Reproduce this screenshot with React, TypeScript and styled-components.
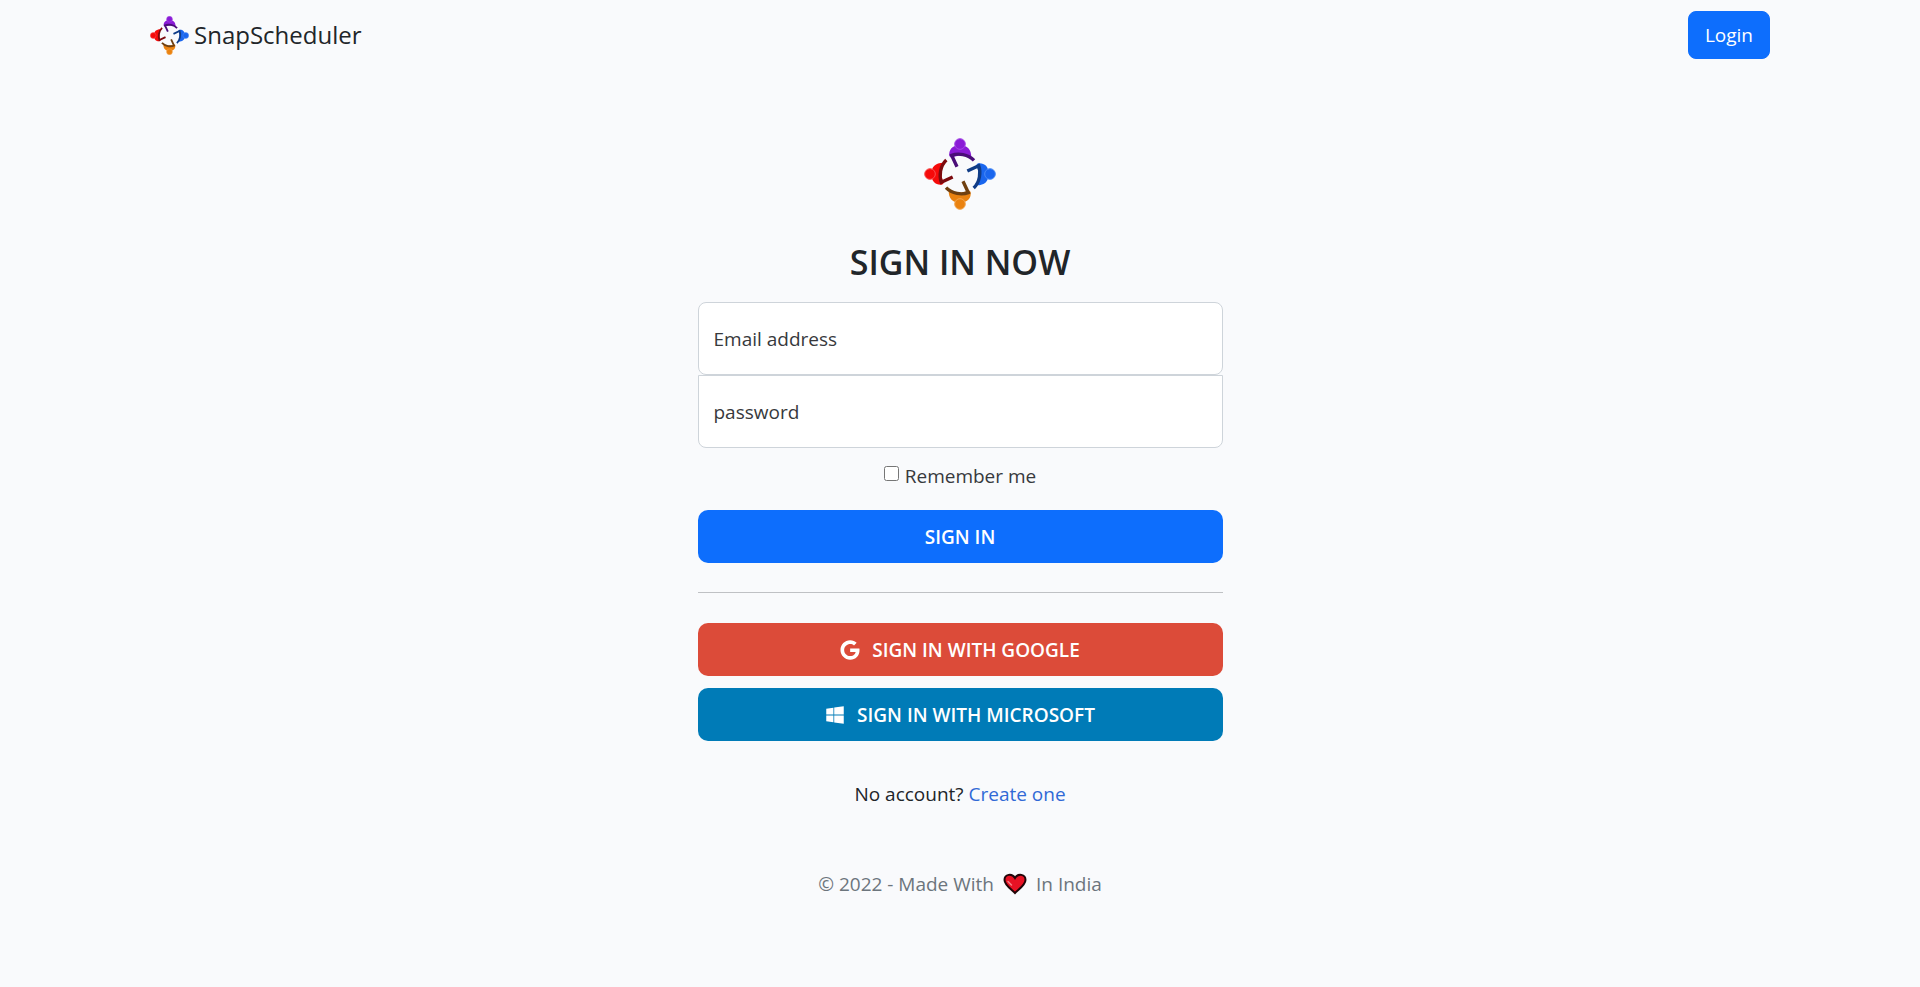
import React from "react";
import styled, { createGlobalStyle } from "styled-components";
import { FaGoogle, FaWindows } from "react-icons/fa";

const GlobalStyle = createGlobalStyle`
  * { box-sizing: border-box; }
  body {
    margin: 0;
    min-height: 100vh;
    background: #f9fafc;
    color: #212529;
    font-family: "Segoe UI", "Open Sans", "Noto Sans", sans-serif;
    font-size: 19px;
    line-height: 30px;
  }
`;

const NavBar = styled.nav`
  display: flex;
  align-items: center;
  justify-content: space-between;
  width: 100%;
  max-width: 1650px;
  margin: 0 auto;
  padding: 11px 15px 10px;
`;

const Brand = styled.a`
  display: flex;
  align-items: center;
  gap: 5px;
  color: #212529;
  font-size: 24px;
  line-height: 38px;
  text-decoration: none;
`;

const LoginButton = styled.button`
  padding: 8px 16px;
  border: 1px solid #0d6efd;
  border-radius: 8px;
  background: #0d6efd;
  color: #fff;
  font: inherit;
  cursor: pointer;
`;

const Main = styled.main`
  width: 100%;
  max-width: 525px;
  margin: 0 auto;
  padding-top: 69px;
  text-align: center;
`;

const LogoSvg = styled.svg`
  display: block;
  margin: 0 auto;
`;

const Title = styled.h1`
  margin: 30px 0 18px;
  font-size: 34px;
  font-weight: 600;
  line-height: 44px;
`;

const Field = styled.div`
  position: relative;
`;

const Input = styled.input<{ $last?: boolean }>`
  display: block;
  width: 100%;
  height: 73px;
  padding: 28px 15px 8px;
  border: 1px solid #ced4da;
  border-radius: ${(p) => (p.$last ? "0 0 8px 8px" : "8px")};
  background: #fff;
  color: #212529;
  font: inherit;
`;

const FieldLabel = styled.label`
  position: absolute;
  top: 0;
  left: 0;
  padding: 22px 16px;
  color: #37393c;
  pointer-events: none;
`;

const Remember = styled.label`
  display: flex;
  align-items: flex-start;
  justify-content: center;
  gap: 6px;
  margin: 13px 0 19px;
  color: #37393c;
`;

const Checkbox = styled.input`
  width: 15px;
  height: 15px;
  margin: 5px 0 0;
`;

const WideButton = styled.button<{ $color: string }>`
  display: flex;
  align-items: center;
  justify-content: center;
  gap: 12px;
  width: 100%;
  height: 53px;
  border: 0;
  border-radius: 10px;
  background: ${(p) => p.$color};
  color: #fff;
  font: inherit;
  font-weight: 600;
  cursor: pointer;
`;

const Divider = styled.hr`
  height: 1px;
  margin: 29px 0 30px;
  border: 0;
  background: #bfc1c4;
`;

const Providers = styled.div`
  display: grid;
  gap: 12px;
`;

const SignUp = styled.p`
  margin: 38px 0 60px;
`;

const Link = styled.a`
  color: #3069d6;
  text-decoration: none;
`;

const Footer = styled.footer`
  display: flex;
  align-items: center;
  justify-content: center;
  gap: 9px;
  color: #6c757d;
`;

const people = [
  { angle: 0, skin: "#8a1bd6", ring: "#a548e6", arms: "#4a0d78" },
  { angle: 90, skin: "#1a66ee", ring: "#4a8af6", arms: "#103c86" },
  { angle: 180, skin: "#ea8210", ring: "#f2a650", arms: "#704010" },
  { angle: 270, skin: "#f50a0a", ring: "#f85050", arms: "#7c0a0e" },
];

function Logo({ size }: { size: number }) {
  return (
    <LogoSvg width={size} height={size} viewBox="-108 -108 216 216" aria-hidden="true">
      {people.map((p) => (
        <g key={p.angle} transform={`rotate(${p.angle})`}>
          <path d="M-32 -54C-34 -72 -24 -86 0 -86C22 -86 34 -74 34 -50C14 -58 -10 -58 -26 -48Z" fill={p.skin} />
          <circle cy="-90" r="16" fill={p.skin} stroke={p.ring} strokeWidth="3" />
          <path d="M-9 -22L-25 -56C-6 -63 24 -60 42 -41" fill="none" stroke={p.arms} strokeWidth="10" />
        </g>
      ))}
    </LogoSvg>
  );
}

function Heart() {
  return (
    <svg width="24" height="22" viewBox="0 0 24 22" role="img" aria-label="love">
      <path d="M12 20C8 16 1.500 12 1.500 7C1.500 1 9 0 12 5C15 0 22.500 1 22.500 7C22.500 12 16 16 12 20Z" fill="#e81224" stroke="#210508" strokeWidth="2" />
      <path d="M5 8.500L8.500 12" fill="none" stroke="#f58088" strokeWidth="1.500" strokeLinecap="round" />
    </svg>
  );
}

export default function App() {
  return (
    <>
      <GlobalStyle />
      <NavBar>
        <Brand href="#">
          <Logo size={39} />
          SnapScheduler
        </Brand>
        <LoginButton type="button">Login</LoginButton>
      </NavBar>
      <Main>
        <Logo size={72} />
        <Title>SIGN IN NOW</Title>
        <form onSubmit={(e) => e.preventDefault()}>
          <Field>
            <Input id="email" type="email" />
            <FieldLabel htmlFor="email">Email address</FieldLabel>
          </Field>
          <Field>
            <Input id="password" type="password" $last />
            <FieldLabel htmlFor="password">password</FieldLabel>
          </Field>
          <Remember>
            <Checkbox type="checkbox" />
            Remember me
          </Remember>
          <WideButton type="submit" $color="#0d6efd">SIGN IN</WideButton>
          <Divider />
          <Providers>
            <WideButton type="button" $color="#dc4b39">
              <FaGoogle size={20} />
              SIGN IN WITH GOOGLE
            </WideButton>
            <WideButton type="button" $color="#007bb7">
              <FaWindows size={20} />
              SIGN IN WITH MICROSOFT
            </WideButton>
          </Providers>
        </form>
        <SignUp>
          No account? <Link href="#">Create one</Link>
        </SignUp>
        <Footer>
          © 2022 - Made With <Heart /> In India
        </Footer>
      </Main>
    </>
  );
}
